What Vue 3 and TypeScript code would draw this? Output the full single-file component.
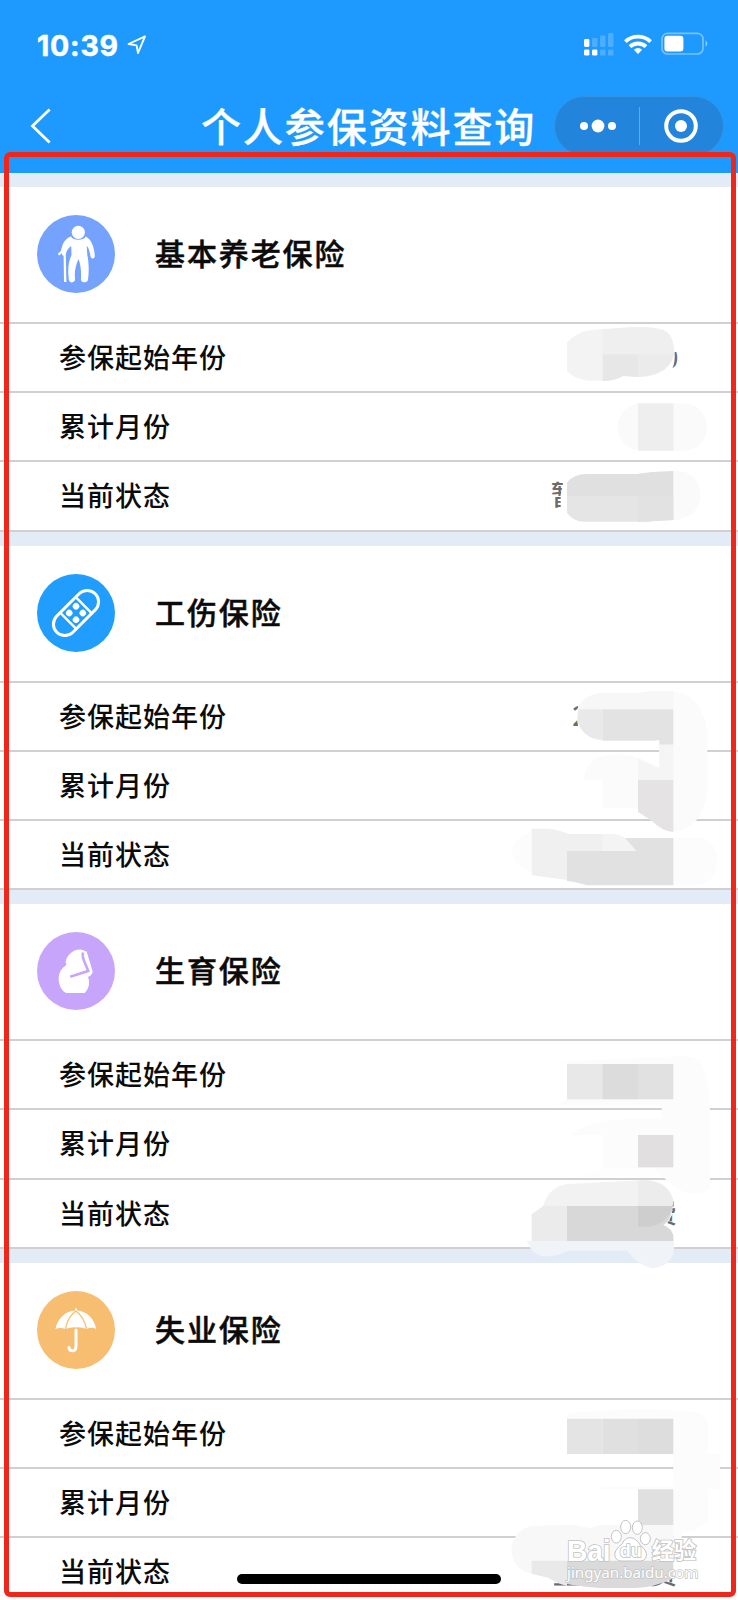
<script setup lang="ts">
type IconName = 'elder' | 'bandage' | 'maternity' | 'umbrella'

interface Insurance {
  title: string
  icon: IconName
}

const sections: Insurance[] = [
  { title: '基本养老保险', icon: 'elder' },
  { title: '工伤保险', icon: 'bandage' },
  { title: '生育保险', icon: 'maternity' },
  { title: '失业保险', icon: 'umbrella' },
]

const fields: string[] = ['参保起始年份', '累计月份', '当前状态']
</script>

<template>
  <div class="screen">
    <header class="top">
      <div class="status">
        <div class="clock">
          <span class="time">10:39</span>
          <svg class="locate" width="20" height="20" viewBox="0 0 20 20">
            <path d="M1.6 9 18 1.4 11 18 9.6 10.4Z" />
          </svg>
        </div>
        <svg class="signals" width="126" height="26" viewBox="0 0 126 26">
          <g fill="#fff">
            <rect x="1" y="7" width="5.4" height="8" rx="1.4" />
            <rect x="1" y="17.4" width="5.4" height="6.2" rx="1.4" />
            <rect x="9" y="17.4" width="5.4" height="6.2" rx="1.4" />
            <g opacity=".2">
              <rect x="9" y="6" width="5.4" height="9" rx="1.2" />
              <rect x="17" y="3.4" width="5.4" height="11.6" rx="1.2" />
              <rect x="25" y="1" width="5.4" height="14" rx="1.2" />
              <rect x="17" y="17.4" width="5.4" height="6" rx="1.2" />
              <rect x="25" y="17.4" width="5.4" height="6" rx="1.2" />
            </g>
            <path d="M55 22 50.8 17.8A6.6 6.6 0 0 1 59.2 17.8Z" />
          </g>
          <g fill="none" stroke="#fff" stroke-width="3.9">
            <path d="M42.4 9.6A18.4 18.4 0 0 1 67.6 9.6" />
            <path d="M47 14.6A11.8 11.8 0 0 1 63 14.6" />
          </g>
          <rect x="79" y="1.4" width="41" height="20.6" rx="5.5" fill="none" stroke="#fff" stroke-opacity=".4" stroke-width="1.7" />
          <rect x="81.4" y="3.8" width="19" height="15.6" rx="3" fill="#fff" />
          <path d="M122.6 8.2Q126 11.6 122.6 15Z" fill="#fff" fill-opacity=".55" />
        </svg>
      </div>
      <div class="nav">
        <svg class="back" width="22" height="38" viewBox="0 0 22 38">
          <path d="M19.6 2.4 2.5 19 19.6 35.6" />
        </svg>
        <h1>个人参保资料查询</h1>
        <div class="capsule">
          <svg class="dots" width="38" height="16" viewBox="0 0 38 16">
            <circle cx="5" cy="8" r="4" />
            <circle cx="19" cy="8" r="6.4" />
            <circle cx="33" cy="8" r="4" />
          </svg>
          <i class="split"></i>
          <svg class="target" width="36" height="36" viewBox="0 0 36 36">
            <circle cx="18" cy="18" r="14.8" fill="none" stroke="#fff" stroke-width="4" />
            <circle cx="18" cy="18" r="6" fill="#fff" />
          </svg>
        </div>
      </div>
    </header>

    <section v-for="s in sections" :key="s.icon" class="card">
      <div class="head">
        <svg class="icon" :class="s.icon" width="78" height="78" viewBox="0 0 78 78">
          <circle cx="39" cy="39" r="39" />
          <g v-if="s.icon === 'elder'" fill="#fff">
            <circle cx="41.3" cy="17.3" r="6.6" />
            <path d="M34 21.6C36 25.8 46.5 26 48.8 21.6C54 24 57.4 32 57.8 41Q57.6 43.8 55.4 43.4Q53.4 43 53.2 39.5Q52.4 34 49.8 30.6Q50 36.5 50.3 40C51.8 47 52.2 56 51 65Q50 68 46.8 67.2Q43.6 67 44 63.6C44.4 56 43.6 49.5 41.5 44C38.8 50 37.2 57 38 63Q38.4 67 34.8 67.4Q31.4 67.6 31.6 62C30.6 53 31.8 46 34.5 40L34.2 31C31.2 33 29.3 36 28.8 39.4L29.4 67H27L26.6 40.6Q25.2 41 24.6 38.3L22.4 40.6Q20.8 40.2 21.2 38.2L24 36C25.4 28.6 28.2 23.4 34 21.6Z" />
          </g>
          <g v-else-if="s.icon === 'bandage'" transform="rotate(-45 39 39)" fill="none" stroke="#fff" stroke-width="3">
            <rect x="11.8" y="27.6" width="54.4" height="22.8" rx="11.4" />
            <path d="M28 27.6V50.4M50 27.6V50.4" stroke-width="2.4" />
            <g fill="#fff" stroke="none">
              <circle cx="34.2" cy="34.2" r="3.3" />
              <circle cx="43.8" cy="34.2" r="3.3" />
              <circle cx="34.2" cy="43.8" r="3.3" />
              <circle cx="43.8" cy="43.8" r="3.3" />
            </g>
          </g>
          <g v-else-if="s.icon === 'maternity'">
            <path d="M37 18.8Q44 16 48.5 19.2L55 39.8Q54 44.3 51 44.8Q54.5 54 47.8 61H29C21 56.5 18.2 41 27.8 34.2Q30.6 32.6 28.5 30.2Q29.8 23 37 18.8Z" fill="#fff" />
            <path d="M46 20.5Q45 25 48 31L51.2 39Q42 42 33.2 44.7" fill="none" stroke="#c6a5fa" stroke-width="2.6" />
            <path d="M48.6 19.6 54.7 39.8Q53.5 43.6 50 43.8" fill="none" stroke="#fff" stroke-width="2" />
          </g>
          <g v-else fill="#fff">
            <path d="M18.4 38C21 26.5 29 20.3 38 19.6V17.5H40V19.6C50 20.5 57 27 59.2 38Q54.6 35.7 49.8 38Q44.6 36 39.3 36.4Q33.5 36 28.3 38Q23.3 35.8 18.4 38Z" />
            <path d="M28.5 38Q30.2 26.5 38.8 20Q47.5 26.5 49.5 38" fill="none" stroke="#f7bd70" stroke-width="1.3" />
            <path d="M39 39V55Q39 60.3 35 59.8Q32 59.3 32 56.4" fill="none" stroke="#fff" stroke-width="3" stroke-linecap="round" />
          </g>
        </svg>
        <h2>{{ s.title }}</h2>
      </div>
      <div v-for="f in fields" :key="f" class="row">{{ f }}</div>
    </section>

    <svg class="redaction" width="238" height="1290" viewBox="0 0 714 3870">
      <defs>
        <clipPath id="zeroEdge"><path d="M524 125H545V190H508Q524 172 524 140Z" /></clipPath>
        <clipPath id="statusStart"><path d="M150 505H192L182 555V610H150Z" /></clipPath>
        <clipPath id="twoEdge"><path d="M210 130H236L230 172 236 210H210Z" /></clipPath>
        <clipPath id="statusEnd"><path d="M516 500H535V600H490L516 555Z" /></clipPath>
        <clipPath id="bottomEdge"><path d="M160 580H240V600H160ZM450 565H535V600H450Z" /></clipPath>
      </defs>

      <!-- pension values -->
      <g>
        <text x="489" y="174" clip-path="url(#zeroEdge)">0</text>
        <text x="152" y="586" clip-path="url(#statusStart)">暂</text>
        <path d="M201 98Q235 58 305 58L360 54Q445 45 490 60Q522 72 522 125Q515 195 420 201L370 198Q340 214 290 212Q230 216 201 182Z" fill="#f3f3f3" />
        <path d="M308 58L360 54Q445 45 490 60Q522 72 522 133H308Z" fill="#efefef" />
        <path d="M308 133H414V201L370 198Q345 213 308 213Z" fill="#e7e7e7" />
        <path d="M414 133H522Q510 195 414 201Z" fill="#ebebeb" />
        <rect x="354" y="280" width="266" height="142" rx="68" fill="#fafafa" />
        <rect x="414" y="280" width="106" height="142" fill="#eeeeee" />
        <path d="M520 483H540Q600 495 602 557Q595 625 520 630Z" fill="#fafafa" />
        <path d="M201 518Q220 492 260 492H410Q450 485 520 483V560H201Z" fill="#e0e0e0" />
        <path d="M201 558H520V630Q480 630 435 635H250Q218 633 201 608Z" fill="#e5e5e5" />
        <path d="M414 558H520V630L435 635H414Z" fill="#e2e2e2" />
      </g>

      <!-- work injury values -->
      <g transform="translate(0 1050)">
        <text x="217" y="197" clip-path="url(#twoEdge)">2</text>
        <path d="M232 148Q250 105 300 99H410Q520 85 560 105Q620 145 622 230V390Q610 505 520 516Q480 514 455 482L414 455V445H308V360H252Q255 300 310 287Q370 278 414 294L478 325V241H300Q240 225 232 148Z" fill="#fbfbfb" />
        <path d="M232 148Q250 105 300 99H410Q460 90 520 93V148Z" fill="#f7f7f7" />
        <path d="M234 148H308V241Q245 235 232 180Z" fill="#e9e9e9" />
        <path d="M308 148H520V254H478V240L460 242H308Z" fill="#e3e3e3" />
        <path d="M478 254H520V360H414V294L478 325Z" fill="#f5f5f5" />
        <path d="M414 360H520V516Q485 512 455 482L414 455Z" fill="#e5e3e4" />
        <path d="M95 515Q45 530 36 572Q40 620 95 635ZM520 534H610Q645 550 652 590Q650 670 590 675H520Z" fill="#fcfcfc" />
        <path d="M95 506H145Q180 510 205 522H320Q385 522 414 573H201V660L95 646Z" fill="#f0f0f0" />
        <path d="M308 522H340Q385 525 410 573H308Z" fill="#f4f4f4" />
        <path d="M201 573H410L375 534H520V676H260Q235 667 201 663Z" fill="#e1e1e1" />
      </g>

      <!-- maternity values -->
      <g transform="translate(0 2160)">
        <text x="449" y="580" clip-path="url(#statusEnd)">费</text>
        <path d="M180 95L500 80Q570 70 602 95Q627 145 630 240V475Q595 500 550 485Q505 460 460 413H310V315H210Q250 285 320 270L485 264V224H165L205 208V100Z" fill="#fcfcfc" />
        <rect x="201" y="102" width="107" height="106" fill="#e8e8e8" />
        <rect x="307" y="102" width="107" height="106" fill="#dcdcdc" />
        <rect x="414" y="102" width="106" height="106" fill="#e1e1e1" />
        <rect x="414" y="315" width="106" height="97" fill="#e1dfe0" />
        <path d="M240 425Q270 430 310 415H450L490 443H250Z" fill="#fefefe" />
        <path d="M130 528Q145 472 201 462L440 450Q505 455 520 510L516 545 130 535Z" fill="#f2f2f2" />
        <path d="M414 452Q500 445 519 510L516 530H414Z" fill="#ececec" />
        <path d="M95 553L130 528H201V633H95Z" fill="#ebebeb" />
        <path d="M201 528H518Q515 570 490 585Q525 600 520 633H201Z" fill="#d8d8d8" />
        <path d="M414 528H518Q500 585 445 590H414Z" fill="#cecece" />
        <path d="M80 633H522V660Q515 710 455 715Q415 705 380 662H205Q165 682 125 678Q90 665 88 645Z" fill="#f0f4f9" />
      </g>

      <!-- unemployment values -->
      <g transform="translate(0 3240)">
        <text x="158" y="582" clip-path="url(#bottomEdge)">正</text>
        <text x="449" y="582" clip-path="url(#bottomEdge)">费</text>
        <path d="M201 70Q400 50 590 65Q625 80 625 115V192H660V298H625V390Q600 425 545 425V500H520V298H290L310 292H520V192H201Z" fill="#fcfcfc" />
        <path d="M201 86H308V192H201Z" fill="#e4e4e4" />
        <path d="M308 86H414V192H308Z" fill="#e0e0e0" />
        <path d="M414 86H520V192H414Z" fill="#dddddd" />
        <path d="M414 298H520V405H414Z" fill="#e0e0e0" />
        <path d="M95 408Q40 420 34 480Q40 540 95 552L201 514H520V405H300L270 415 220 404Z" fill="#f8f8f8" />
        <path d="M95 512H201V588Q165 578 145 563L95 551Z" fill="#e9e9e9" />
        <path d="M201 512H520V565Q460 595 400 594H300Q240 590 201 582Z" fill="#dadada" />
      </g>
    </svg>

    <svg class="watermark" width="140" height="75" viewBox="0 0 420 225">
      <g class="mark">
        <text class="latin" x="6" y="125" textLength="131" lengthAdjust="spacingAndGlyphs">Bai</text>
        <ellipse cx="154" cy="53" rx="15" ry="19" />
        <ellipse cx="182" cy="24" rx="15" ry="20" />
        <ellipse cx="217" cy="26" rx="15" ry="20" />
        <ellipse cx="241" cy="59" rx="15" ry="18" />
        <path d="M196 56Q179 56 172 74Q145 95 150 112Q155 129 179 126H217Q240 129 244 111Q247 95 226 79Q214 57 196 56Z" />
        <text class="du" x="164" y="115">du</text>
        <text class="cjk" x="260" y="121">经验</text>
        <text class="url" x="6" y="178" textLength="394" lengthAdjust="spacingAndGlyphs">jingyan.baidu.com</text>
      </g>
    </svg>

    <div class="home-bar"></div>
    <div class="frame"></div>
  </div>
</template>

<style>
body {
  margin: 0;
}
</style>

<style scoped>
.screen {
  position: relative;
  width: 738px;
  height: 1600px;
  overflow: hidden;
  background: #fff;
  color: #0b0b0b;
  font-family: 'Liberation Sans', 'Noto Sans CJK SC', sans-serif;
}
.top {
  height: 173px;
  background: #1e9aff;
  color: #fff;
}
.status {
  height: 88px;
  box-sizing: border-box;
  display: flex;
  justify-content: space-between;
  align-items: flex-start;
  padding: 32px 29px 0 37px;
}
.clock {
  display: flex;
  align-items: center;
  gap: 6px;
  height: 25px;
}
.time {
  font: 700 28.5px/25px Inter, sans-serif;
  letter-spacing: 0.8px;
  -webkit-text-stroke: 0.5px #fff;
  width: 84px;
  padding-top: 1px;
}
.locate {
  fill: none;
  stroke: #fff;
  stroke-width: 1.9;
  stroke-linejoin: round;
}
.nav {
  height: 76px;
  display: flex;
  align-items: center;
  padding: 0 14px 0 30px;
}
.back {
  fill: none;
  stroke: #fff;
  stroke-width: 2.8;
}
h1 {
  margin: 0 0 3px 149px;
  width: 353px;
  font: 500 40px/60px 'Noto Sans CJK SC', sans-serif;
  letter-spacing: 1.9px;
  white-space: nowrap;
  -webkit-text-stroke: 0.3px #fff;
}
.capsule {
  width: 170px;
  height: 60px;
  box-sizing: border-box;
  border: 1px solid #3294e4;
  border-radius: 30px;
  background: #2284da;
  display: flex;
  align-items: center;
  flex: none;
}
.dots {
  margin-left: 24px;
  fill: #fff;
}
.split {
  width: 1px;
  height: 38px;
  margin: 0 23px 0 22px;
  background: #62a9e6;
}
.card {
  border-top: 14px solid #e3ecf6;
}
.head {
  height: 135px;
  border-bottom: 2px solid #d0d0d0;
  display: flex;
  align-items: center;
  padding-left: 37px;
}
.icon {
  position: relative;
  top: -0.5px;
}
.elder {
  fill: #74a2fd;
}
.bandage {
  fill: #209dfd;
}
.maternity {
  fill: #c6a5fa;
}
.umbrella {
  fill: #f7bd70;
}
h2 {
  margin: 0 0 5px 40px;
  font: 500 30px/44px 'Noto Sans CJK SC', sans-serif;
  letter-spacing: 1.9px;
  -webkit-text-stroke: 0.5px #0b0b0b;
}
.row {
  height: 69.2px;
  box-sizing: border-box;
  border-bottom: 2px solid #d0d0d0;
  padding-left: 59px;
  font: 500 27px/66.6px 'Noto Sans CJK SC', sans-serif;
  letter-spacing: 1px;
}
.redaction {
  position: absolute;
  left: 500px;
  top: 310px;
}
.redaction text {
  font: 500 81px 'Noto Sans CJK SC', sans-serif;
  fill: #6c6c6c;
}
.watermark {
  position: absolute;
  left: 565px;
  top: 1519px;
}
.mark {
  fill: #fff;
  stroke: #c3c3c3;
  stroke-width: 3;
}
.mark text {
  paint-order: stroke;
  stroke-width: 5;
}
.latin {
  font: 700 86px 'Liberation Sans', sans-serif;
}
.mark .du {
  font: 700 54px 'Liberation Sans', sans-serif;
}
.cjk {
  font: 700 67px 'Noto Sans CJK SC', sans-serif;
}
.mark .url {
  font: 400 42px 'Noto Sans', sans-serif;
  stroke-width: 4;
}
.home-bar {
  position: absolute;
  left: 237px;
  top: 1574px;
  width: 264px;
  height: 10px;
  border-radius: 5px;
  background: #000;
}
.frame {
  position: absolute;
  left: 3.5px;
  top: 152px;
  width: 732px;
  height: 1445px;
  box-sizing: border-box;
  border: 5px solid #ef271b;
  border-radius: 6px;
}
</style>
